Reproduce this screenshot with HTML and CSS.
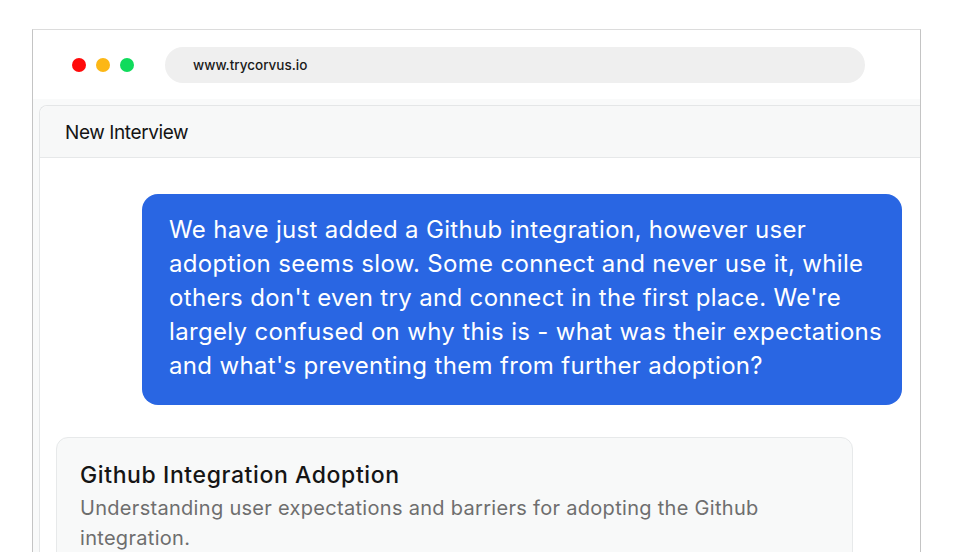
FILE: index.html
```html
<!DOCTYPE html>
<html lang="en">
<head>
<meta charset="utf-8">
<title>Corvus - New Interview</title>
<link rel="stylesheet" href="styles.css">
</head>
<body>
<div class="window">
  <div class="topbar">
    <div class="dots">
      <span class="dot red"></span>
      <span class="dot yellow"></span>
      <span class="dot green"></span>
    </div>
    <div class="url">www.trycorvus.io</div>
  </div>
  <div class="content">
    <div class="panel">
      <div class="panel-header">New Interview</div>
      <div class="panel-body">
        <div class="bubble-row">
          <div class="bubble">We have just added a Github integration, however user adoption seems slow. Some connect and never use it, while others don't even try and connect in the first place. We're largely confused on why this is - what was their expectations and what's preventing them from further adoption?</div>
        </div>
        <div class="card">
          <div class="card-title">Github Integration Adoption</div>
          <div class="card-desc">Understanding user expectations and barriers for adopting the Github integration.</div>
        </div>
      </div>
    </div>
  </div>
</div>
</body>
</html>
```
FILE: styles.css
```css
html, body {
  margin: 0;
  padding: 0;
  background: #ffffff;
  overflow: hidden;
  height: 552px;
}
body {
  font-family: "Inter", "Liberation Sans", sans-serif;
  color: #111;
}
.window {
  margin: 29px 0 0 32px;
  width: 887px;
  height: 600px;
  border: 1px solid #c4c4c4;
  border-top-color: #dcdcdc;
  border-bottom: none;
  display: flex;
  flex-direction: column;
  background: #fff;
}
.topbar {
  height: 69px;
  display: flex;
  align-items: center;
  flex-shrink: 0;
}
.dots {
  display: flex;
  gap: 10px;
  padding-left: 39px;
  width: 93px;
}
.dot {
  width: 14px;
  height: 14px;
  border-radius: 50%;
  display: block;
}
.red { background: #ff0a0a; }
.yellow { background: #fcb716; }
.green { background: #10db5c; }
.url {
  margin-top: 1px;
  width: 672px;
  height: 36px;
  border-radius: 18px;
  background: #efefef;
  padding-left: 28px;
  display: flex;
  align-items: center;
  font-size: 13.5px;
  font-weight: 500;
  color: #1a1a1a;
}
.content {
  flex: 1;
  background: #f9fafa;
  padding: 6px 0 0 6px;
  display: flex;
}
.panel {
  flex: 1;
  border: 1px solid #e4e6e7;
  border-right: none;
  border-bottom: none;
  border-top-left-radius: 8px;
  background: #fff;
  display: flex;
  flex-direction: column;
}
.panel-header {
  height: 52px;
  box-sizing: border-box;
  border-bottom: 1px solid #e6e8e9;
  background: #f7f8f8;
  border-top-left-radius: 8px;
  padding: 2px 0 0 25px;
  display: flex;
  align-items: center;
  font-size: 19px;
  letter-spacing: -0.4px;
  color: #141414;
}
.panel-body {
  flex: 1;
  padding: 36px 18px 0 16px;
  display: flex;
  flex-direction: column;
  gap: 32px;
}
.bubble-row {
  display: flex;
  justify-content: flex-end;
}
.bubble {
  width: 760px;
  box-sizing: border-box;
  background: #2966e3;
  color: #ffffff;
  border-radius: 16px;
  padding: 19px 10px 22px 27px;
  font-size: 24px;
  line-height: 34px;
  letter-spacing: 0.33px;
}
.card {
  width: 797px;
  box-sizing: border-box;
  background: #f8f9f9;
  border: 1px solid #e7e9ea;
  border-radius: 12px;
  padding: 22px 24px 24px 23px;
}
.card-title {
  font-size: 23px;
  font-weight: 500;
  line-height: 30px;
  letter-spacing: 0.6px;
  color: #151515;
  margin-bottom: 3px;
}
.card-desc {
  font-size: 20px;
  line-height: 30px;
  letter-spacing: 0.3px;
  color: #6e6e6e;
}
```
